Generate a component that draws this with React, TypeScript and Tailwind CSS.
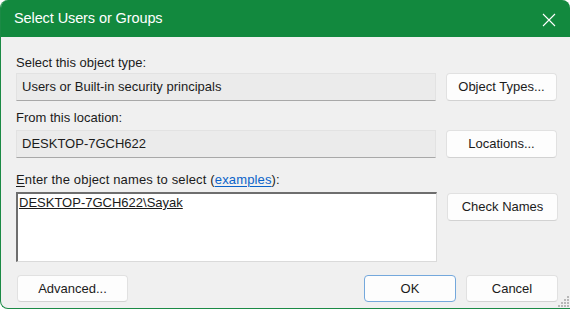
import React from 'react';

const font = { fontFamily: '"Liberation Sans", Arial, sans-serif' };

// light "Win11" style push button
const DlgButton = ({ label, className = '', primary = false }: { label: string; className?: string; primary?: boolean }) => (
  <button
    className={`h-[27px] rounded-[4px] bg-[#fdfdfd] text-[13px] text-[#1b1b1b] border ${
      primary ? 'border-[#74a8dc]' : 'border-[#e1e1e1] border-b-[#d2d2d2]'
    } ${className}`}
  >
    {label}
  </button>
);

const ReadOnlyBox = ({ value }: { value: string }) => (
  <div className="w-[420px] h-[28px] flex items-center pl-[5px] bg-[#ebebeb] border border-[#e2e2e2] border-b-[#a8a8a8] text-[13px] text-[#1b1b1b]">
    {value}
  </div>
);

export default function App() {
  return (
    <div className="w-[570px] h-[310px] bg-white" style={font}>
      <div className="relative w-[570px] h-[309px] flex flex-col bg-[#f0f0f0] rounded-t-[8px] rounded-bl-[8px] border-l border-b border-[#1b8a45] overflow-hidden">
        {/* title bar */}
        <div className="h-[37px] shrink-0 flex items-center justify-between bg-[#12893e] pl-[14px] pr-[14px] -ml-px">
          <span className="text-[14.5px] text-white tracking-[-0.1px]">Select Users or Groups</span>
          <svg width="14" height="14" viewBox="0 0 14 14" className="mt-[2px]">
            <path d="M1 1 L13 13 M13 1 L1 13" stroke="white" strokeWidth="1.1" />
          </svg>
        </div>

        <div className="flex flex-col pl-[15px] pr-[12px] text-[13px] text-[#1b1b1b]">
          <div className="pt-[18px] leading-[16px]">Select this object type:</div>
          <div className="mt-[2px] flex gap-[10px]">
            <ReadOnlyBox value="Users or Built-in security principals" />
            <DlgButton label="Object Types..." className="w-[111px] h-[28px]" />
          </div>

          <div className="mt-[9px] leading-[16px]">From this location:</div>
          <div className="mt-[4px] flex gap-[10px]">
            <ReadOnlyBox value="DESKTOP-7GCH622" />
            <DlgButton label="Locations..." className="w-[111px] h-[28px]" />
          </div>

          <div className="mt-[14px] leading-[16px] tracking-[0.15px]">
            <span className="underline underline-offset-2">E</span>nter the object names to select (
            <span className="text-[#0a63c9] underline underline-offset-2">examples</span>):
          </div>
          <div className="mt-[4px] flex gap-[10px] items-start">
            <div className="w-[421px] h-[70px] bg-white border-t-2 border-l-2 border-[#6e6e6e] border-r border-b border-r-[#dadada] border-b-[#dadada] pl-[1px] pt-[1px] leading-[16px]">
              <span className="underline underline-offset-1">DESKTOP-7GCH622\Sayak</span>
            </div>
            <DlgButton label="Check Names" className="w-[111px] h-[28px] mt-px" />
          </div>

          <div className="mt-[13px] flex items-center">
            <DlgButton label="Advanced..." className="w-[111px] ml-px" />
            <div className="flex-1" />
            <DlgButton label="OK" primary className="w-[92px]" />
            <DlgButton label="Cancel" className="w-[92px] ml-[10px]" />
          </div>
        </div>

        {/* size grip */}
        <svg width="12" height="12" viewBox="0 0 12 12" className="absolute right-0 bottom-0">
          {[
            [9, 0],
            [6, 3], [9, 3],
            [3, 6], [6, 6], [9, 6],
            [0, 9], [3, 9], [6, 9], [9, 9],
          ].map(([x, y], i) => (
            <rect key={i} x={x} y={y} width="2" height="2" fill="#b8b8b8" />
          ))}
        </svg>
      </div>
    </div>
  );
}
